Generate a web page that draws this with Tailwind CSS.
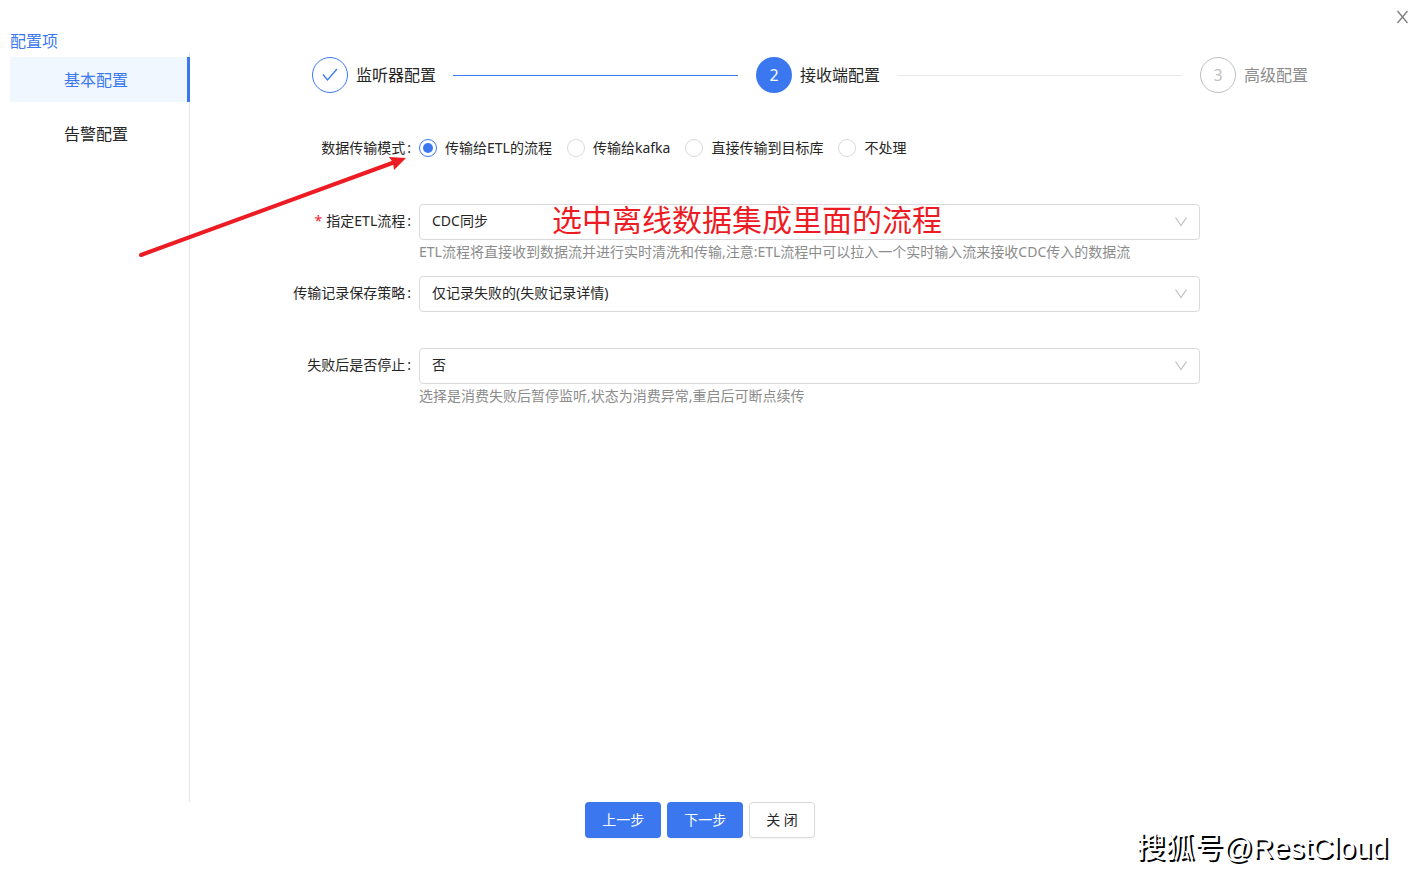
<!DOCTYPE html>
<html lang="zh-CN">
<head>
    <meta charset="UTF-8">
    <meta name="viewport" content="width=device-width, initial-scale=1.0">
    <title>接收端配置</title>
    <script src="https://cdn.jsdelivr.net/npm/@tailwindcss/browser@4"></script>
</head>
<body class="bg-white font-['Noto_Sans','Noto_Sans_CJK_SC',sans-serif] text-sm text-[#262626]">
    <div class="relative flex min-h-screen flex-col overflow-hidden">
        <button type="button" aria-label="关闭窗口" class="absolute top-2 right-[10px] z-10 flex size-4 items-center justify-center text-[#7d7d7d]">
            <svg class="size-4" viewBox="0 0 16 16" fill="none" stroke="currentColor" stroke-width="1.3"><path d="M2.500 3 12.500 15M12.500 3 2.500 15"/></svg>
        </button>

        <div class="flex flex-1">
            <!-- Sidebar -->
            <aside class="flex w-[190px] shrink-0 flex-col pt-[29px]">
                <h2 class="h-6 pl-[10px] text-base leading-6 text-[#3b78f0]">配置项</h2>
                <nav class="flex flex-1 flex-col gap-[9px] border-r border-[#e6e6e6] pt-1 pl-[10px]">
                    <a href="#basic" class="-mr-px block h-[45px] border-r-[3px] border-[#3b78f0] bg-[#f0f7ff] pl-[54px] text-base leading-[47px] text-[#3b78f0]">基本配置</a>
                    <a href="#alarm" class="block h-[45px] pl-[54px] text-base leading-[47px]">告警配置</a>
                </nav>
            </aside>

            <main class="flex-1 pt-[57px]">
                <!-- Steps -->
                <ol class="flex items-center pr-[113px] pl-[122px] text-base">
                    <li class="flex flex-1 items-center">
                        <span class="flex size-9 shrink-0 items-center justify-center rounded-full border border-[#3b78f0] text-[#3b78f0]">
                            <svg class="size-4" viewBox="0 0 16 16" fill="none" stroke="currentColor" stroke-width="1.3"><path d="M1 7.500 5.500 13 15 2"/></svg>
                        </span>
                        <span class="ml-2 whitespace-nowrap">监听器配置</span>
                        <span class="mr-[18px] ml-[17px] h-px flex-1 bg-[#3b78f0]"></span>
                    </li>
                    <li class="flex flex-1 items-center">
                        <span class="flex size-9 shrink-0 items-center justify-center rounded-full bg-[#3b78f0] text-white">2</span>
                        <span class="ml-2 whitespace-nowrap">接收端配置</span>
                        <span class="mr-[18px] ml-[17px] h-px flex-1 bg-[#e8e8e8]"></span>
                    </li>
                    <li class="flex items-center text-[#8c8c8c]">
                        <span class="flex size-9 shrink-0 items-center justify-center rounded-full border border-[#bfbfbf] text-[#bfbfbf]">3</span>
                        <span class="ml-2 whitespace-nowrap">高级配置</span>
                    </li>
                </ol>

                <!-- Form -->
                <form id="receiver" class="mt-[37px] grid grid-cols-[221px_1fr] gap-x-2 pr-[221px]">
                    <div id="mode-label" class="text-right leading-9">数据传输模式<span class="ml-[2px]">:</span></div>
                    <div role="radiogroup" aria-labelledby="mode-label" class="flex h-[74px] items-start gap-[15px] leading-9 whitespace-nowrap">
                        <label class="flex items-center gap-2">
                            <input type="radio" name="mode" checked class="size-[18px] appearance-none rounded-full border border-[#d9d9d9] bg-clip-content p-[3px] checked:border-[#3b78f0] checked:bg-[#3b78f0]">
                            传输给ETL的流程
                        </label>
                        <label class="flex items-center gap-2">
                            <input type="radio" name="mode" class="size-[18px] appearance-none rounded-full border border-[#d9d9d9] bg-clip-content p-[3px] checked:border-[#3b78f0] checked:bg-[#3b78f0]">
                            传输给kafka
                        </label>
                        <label class="flex items-center gap-2">
                            <input type="radio" name="mode" class="size-[18px] appearance-none rounded-full border border-[#d9d9d9] bg-clip-content p-[3px] checked:border-[#3b78f0] checked:bg-[#3b78f0]">
                            直接传输到目标库
                        </label>
                        <label class="flex items-center gap-2">
                            <input type="radio" name="mode" class="size-[18px] appearance-none rounded-full border border-[#d9d9d9] bg-clip-content p-[3px] checked:border-[#3b78f0] checked:bg-[#3b78f0]">
                            不处理
                        </label>
                    </div>

                    <label for="flow" class="text-right leading-[34px]"><span class="mr-1 text-[#f5222d]">*</span>指定ETL流程<span class="ml-[2px]">:</span></label>
                    <div class="h-[72px]">
                        <div class="relative">
                            <select id="flow" class="block h-9 w-full appearance-none rounded border border-[#d9d9d9] bg-white pr-8 pb-[2px] pl-3">
                                <option>CDC同步</option>
                            </select>
                            <svg class="pointer-events-none absolute top-3 right-[13px] size-3 text-[#bfbfbf]" viewBox="0 0 12 12" fill="none" stroke="currentColor" stroke-width="1.2"><path d="M.5 1.500 6 9.500 11.500 1.500"/></svg>
                            <p class="absolute top-0 left-[133px] text-[30px] leading-8 whitespace-nowrap text-[#ed1c24]">选中离线数据集成里面的流程</p>
                        </div>
                        <p class="leading-6 whitespace-nowrap text-[#8c8c8c]">ETL流程将直接收到数据流并进行实时清洗和传输,注意:ETL流程中可以拉入一个实时输入流来接收CDC传入的数据流</p>
                    </div>

                    <label for="policy" class="text-right leading-[34px]">传输记录保存策略<span class="ml-[2px]">:</span></label>
                    <div class="h-[72px]">
                        <div class="relative">
                            <select id="policy" class="block h-9 w-full appearance-none rounded border border-[#d9d9d9] bg-white pr-8 pb-[2px] pl-3">
                                <option>仅记录失败的(失败记录详情)</option>
                            </select>
                            <svg class="pointer-events-none absolute top-3 right-[13px] size-3 text-[#bfbfbf]" viewBox="0 0 12 12" fill="none" stroke="currentColor" stroke-width="1.2"><path d="M.5 1.500 6 9.500 11.500 1.500"/></svg>
                        </div>
                    </div>

                    <label for="stop" class="text-right leading-[34px]">失败后是否停止<span class="ml-[2px]">:</span></label>
                    <div class="h-[72px]">
                        <div class="relative">
                            <select id="stop" class="block h-9 w-full appearance-none rounded border border-[#d9d9d9] bg-white pr-8 pb-[2px] pl-3">
                                <option>否</option>
                            </select>
                            <svg class="pointer-events-none absolute top-3 right-[13px] size-3 text-[#bfbfbf]" viewBox="0 0 12 12" fill="none" stroke="currentColor" stroke-width="1.2"><path d="M.5 1.500 6 9.500 11.500 1.500"/></svg>
                        </div>
                        <p class="leading-6 text-[#8c8c8c]">选择是消费失败后暂停监听,状态为消费异常,重启后可断点续传</p>
                    </div>
                </form>
            </main>
        </div>

        <footer class="flex h-[76px] items-start justify-center gap-[6px] pr-[21px]">
            <button type="button" class="h-9 rounded bg-[#3b78f0] px-[17px] text-white shadow-xs">上一步</button>
            <button type="submit" form="receiver" class="h-9 rounded bg-[#3b78f0] px-[17px] text-white shadow-xs">下一步</button>
            <button type="button" class="h-9 rounded border border-[#d9d9d9] bg-white px-4 shadow-xs">关 闭</button>
        </footer>

        <!-- Red arrow -->
        <svg class="pointer-events-none absolute top-[150px] left-[135px] h-[110px] w-[275px]" viewBox="0 0 275 110" fill="#ed1c24">
            <path d="M6 105 260 12" stroke="#ed1c24" stroke-width="4" stroke-linecap="round"/>
            <path d="M271 8 254 7 258 12.500 259 20Z"/>
        </svg>

        <p class="absolute right-[33px] bottom-[10px] font-['Liberation_Sans','Noto_Sans_CJK_SC',sans-serif] text-[29px] leading-10 whitespace-nowrap text-white [text-shadow:2px_2px_0_#000]">搜狐号@RestCloud</p>
    </div>
</body>
</html>
